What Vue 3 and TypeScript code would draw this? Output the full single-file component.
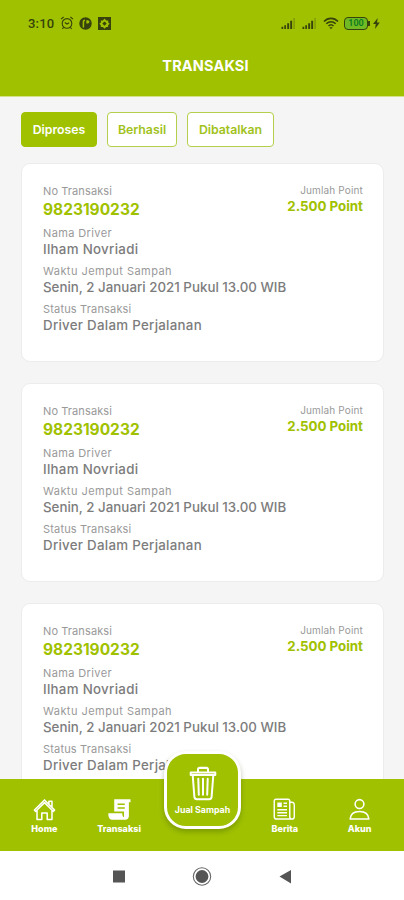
<script setup lang="ts">
interface Transaction {
  id: number
  number: string
  points: string
  driver: string
  pickup: string
  status: string
}

const filters: { label: string; key: string; active: boolean }[] = [
  { label: 'Diproses', key: 'process', active: true },
  { label: 'Berhasil', key: 'success', active: false },
  { label: 'Dibatalkan', key: 'cancelled', active: false },
]

const transactions: Transaction[] = [1, 2, 3].map((id) => ({
  id,
  number: '9823190232',
  points: '2.500 Point',
  driver: 'Ilham Novriadi',
  pickup: 'Senin, 2 Januari 2021 Pukul 13.00 WIB',
  status: 'Driver Dalam Perjalanan',
}))
</script>

<template>
  <div class="screen">
    <header class="header">
      <div class="status">
        <div class="status-left">
          <span class="clock">3:10</span>
          <svg class="alarm" width="14" height="14" viewBox="0 0 14 14" fill="none" stroke="currentColor" stroke-width="1.1">
            <circle cx="7" cy="7.4" r="4.8" />
            <path d="M1 3.2 3.6 1M13 3.2 10.4 1M3.6 11.2 2.4 13M10.4 11.2l1.2 1.8M4.8 6.5 7 8l2.2-1.2" />
          </svg>
          <svg class="pie" width="13" height="13" viewBox="0 0 13 13">
            <circle cx="6.5" cy="6.5" r="6.2" fill="currentColor" />
            <path d="M4.4 10.600V5.200c0-1.200.6-1.900 1.600-1.900" fill="none" stroke="#9fc100" stroke-width="1.500" />
            <path d="M7.300 3.200h1.500a1.600 1.600 0 0 1 0 3.200H7.300z" fill="#9fc100" />
          </svg>
          <svg class="puzzle" width="13" height="13" viewBox="0 0 13 13">
            <rect width="13" height="13" fill="currentColor" />
            <path d="m6.5 1.6 1.7 2h2v2l1.5 1.2-1.6 1.4v1.9H8.2l-1.7 1.7-1.6-1.7H2.8V8.2L1.3 6.8l1.6-1.3V3.6h2z" fill="#9fc100" />
            <path d="m6.5 4.4 2.2 2.2-2.2 2.2-2.2-2.2z" fill="currentColor" />
          </svg>
        </div>
        <div class="status-right">
          <svg v-for="n in 2" :key="n" class="signal" width="15" height="11" viewBox="0 0 15 11" fill="currentColor">
            <path d="M.5 8.7h1.7V11H.5zM3.3 7.2H5V11H3.3zM6.2 5.2h1.9V11H6.2zM9.2 2.7h1.9V11H9.2z" />
            <path d="M12.2 0H14v11h-1.8z" opacity=".25" />
          </svg>
          <svg class="wifi" width="16" height="13" viewBox="0 0 16 13" fill="none" stroke="currentColor" stroke-width="1.6">
            <path d="M1 4.5c4-4.2 10-4.2 14 0M3.3 6.8c2.8-2.8 6.6-2.8 9.4 0M5.5 9c1.5-1.500 3.500-1.500 5 0" />
            <path d="m6.3 10.2 1.7 2 1.7-2z" fill="currentColor" stroke="none" />
          </svg>
          <span class="battery">100</span>
          <svg class="bolt" width="7" height="11" viewBox="0 0 7 11"><path d="M4.7 0 0 6h2.8L2 11l4.8-6.4H4z" fill="currentColor" /></svg>
        </div>
      </div>
      <h1 class="title"><span>TRANSAKSI</span></h1>
    </header>

    <main class="content">
      <div class="filters">
        <button v-for="f in filters" :key="f.key" class="chip" :class="[f.key, { active: f.active }]">{{ f.label }}</button>
      </div>
      <article v-for="t in transactions" :key="t.id" class="card">
        <div class="details">
          <div class="field">
            <span class="label l-no">No Transaksi</span>
            <strong class="number">{{ t.number }}</strong>
          </div>
          <div class="field">
            <span class="label l-driver">Nama Driver</span>
            <span class="value v-driver">{{ t.driver }}</span>
          </div>
          <div class="field">
            <span class="label l-time">Waktu Jemput Sampah</span>
            <span class="value v-time">{{ t.pickup }}</span>
          </div>
          <div class="field">
            <span class="label l-status">Status Transaksi</span>
            <span class="value v-status">{{ t.status }}</span>
          </div>
        </div>
        <div class="points">
          <span class="points-label">Jumlah Point</span>
          <strong class="points-value">{{ t.points }}</strong>
        </div>
      </article>
    </main>

    <nav class="tabs">
      <a class="tab home">
        <svg width="23" height="23" viewBox="0 0 24 24" fill="none" stroke="currentColor" stroke-width="1.6" stroke-linejoin="round" stroke-linecap="round">
          <path d="M1.500 12.600 12 2l10.500 10.600-1.400 1.300L12 4.800l-9.100 9.100zM4.200 13v9.500h5v-6.800h5.600v6.800h5V13M16.600 6V3.400h3.200v6" />
        </svg>
        <span>Home</span>
      </a>
      <a class="tab trans">
        <svg width="23" height="23" viewBox="0 0 24 24">
          <path d="M6.500 1.300h17v3.200h-1.700v14c0 3-1.500 4.200-3.800 4.200H4C1.700 22.700.3 20.300.3 16h14.600c0 2.500.6 4 1.800 4V14H6.500z" fill="#fff" />
          <path d="M10 6.600h7.500M10 10.500h7.500" stroke="#9fc100" stroke-width="1.500" />
        </svg>
        <span>Transaksi</span>
      </a>
      <a class="tab news">
        <svg width="23" height="23" viewBox="0 0 24 24" fill="none" stroke="currentColor" stroke-width="1.5" stroke-linejoin="round">
          <path d="M17.500 4.200V3c0-1-.7-1.700-1.700-1.700H3C2 1.300 1.300 2 1.300 3v16.500c0 1.500 1 2.500 2.500 2.500h15.900c1.500 0 2.500-1 2.500-2.500V7c0-1.500-1.500-2.800-4.700-2.800v15c0 1.800.8 2.800 2.200 2.800" />
          <path d="M4.500 4.700h4.700v4.700H4.500z" fill="currentColor" stroke="none" />
          <path d="M11 5.500h3.600M11 8.700h3.600M4.500 12.300h10.100M4.500 15.300h10.100M4.500 18.400h10.100" />
        </svg>
        <span>Berita</span>
      </a>
      <a class="tab account">
        <svg width="23" height="23" viewBox="0 0 24 24" fill="none" stroke="currentColor" stroke-width="1.600" stroke-linejoin="round">
          <circle cx="12" cy="6.300" r="4.600" />
          <path d="M2.200 22c.4-5.400 4.300-8 9.800-8s9.400 2.600 9.800 8z" />
        </svg>
        <span>Akun</span>
      </a>
      <a class="sell">
        <svg width="28" height="35" viewBox="0 0 28 34" preserveAspectRatio="none" fill="none" stroke="#fff" stroke-width="2" stroke-linejoin="round" stroke-linecap="round">
          <path d="M1.700 6.300h24.600v2.500H1.700zM9 6V3.400c0-1 .6-1.600 1.600-1.600h6.800c1 0 1.600.6 1.600 1.600V6M3.700 9l1.700 21c.2 1.500 1 2.300 2.400 2.300h12.400c1.400 0 2.200-.8 2.400-2.300L24.300 9M9.300 12.500l.5 15.500M14 12.500V28M18.700 12.500 18.200 28" />
        </svg>
        <span>Jual Sampah</span>
      </a>
    </nav>

    <footer class="system">
      <svg width="404" height="49" viewBox="0 0 404 49">
        <rect x="113" y="19.500" width="12" height="12" fill="#555" />
        <circle cx="202" cy="25.500" r="8.700" fill="none" stroke="#666" stroke-width="1.100" />
        <circle cx="202" cy="25.500" r="6.400" fill="#555" />
        <path d="M279.500 25.500 291 19v13.500z" fill="#555" />
      </svg>
    </footer>
  </div>
</template>

<style>
body {
  margin: 0;
}
</style>

<style scoped>
.screen {
  width: 404px;
  height: 900px;
  display: flex;
  flex-direction: column;
  overflow: hidden;
  background: #f5f5f5;
  font-family: Inter, 'Noto Sans', sans-serif;
  white-space: nowrap;
}
.header {
  height: 97px;
  flex: none;
  background: #9fc100;
  border-bottom: 1px solid #d3e18a;
  box-sizing: border-box;
}
.status {
  height: 46px;
  display: flex;
  justify-content: space-between;
  align-items: center;
  padding: 0 24px 0 28px;
  box-sizing: border-box;
  color: #36430c;
}
.status-left,
.status-right {
  display: flex;
  align-items: center;
}
.clock {
  width: 32px;
  font: 500 13px Roboto, sans-serif;
  letter-spacing: 0.2px;
}
.pie {
  margin: 0 6px 0 5px;
}
.signal {
  margin-right: 6px;
}
.wifi {
  margin-right: 5px;
}
.battery {
  position: relative;
  width: 24px;
  height: 13px;
  box-sizing: border-box;
  border: 1.500px solid #36430c;
  border-radius: 4px;
  background: #72ba24;
  color: #087b20;
  font: 600 9px/11px Roboto, sans-serif;
  text-align: center;
  margin-right: 5px;
}
.battery::after {
  content: '';
  position: absolute;
  right: -3px;
  top: 3px;
  width: 2px;
  height: 5px;
  background: #36430c;
}
.title {
  margin: 0;
  height: 38px;
  display: flex;
  align-items: center;
  justify-content: center;
  padding-left: 7px;
  color: #fff;
  font-size: 14.500px;
  font-weight: 700;
  letter-spacing: 0.15px;
}
.content {
  flex: 1;
  min-height: 0;
  overflow: hidden;
  padding: 15px 20px 0 21px;
}
.filters {
  display: flex;
  gap: 10px;
  margin-bottom: 16px;
}
.chip {
  height: 35px;
  box-sizing: border-box;
  padding: 0;
  border: 1px solid #b3cf4b;
  border-radius: 4px;
  background: #fff;
  color: #a1c21b;
  font: 600 12.300px Inter, sans-serif;
}
.chip.active {
  background: #9fc100;
  border-color: #9fc100;
  color: #fff;
}
.process {
  width: 76px;
}
.success {
  width: 70px;
}
.cancelled {
  width: 87px;
}
.card {
  height: 199px;
  box-sizing: border-box;
  margin-bottom: 21px;
  padding: 19px 20px 19px 21px;
  display: flex;
  justify-content: space-between;
  border: 1px solid #ececec;
  border-radius: 9px;
  background: #fff;
}
.field {
  display: flex;
  flex-direction: column;
  align-items: flex-start;
  margin-bottom: 5px;
}
.label {
  font-size: 11px;
  line-height: 16px;
  color: #999;
}
.value {
  font-size: 13.300px;
  line-height: 17px;
  font-weight: 500;
  color: #7c7c7c;
}
.l-no {
  letter-spacing: 0.1px;
}
.l-driver {
  letter-spacing: 0.38px;
}
.l-time {
  letter-spacing: 0.46px;
}
.l-status {
  letter-spacing: 0.17px;
}
.v-driver {
  letter-spacing: 0.3px;
}
.v-time {
  letter-spacing: 0.02px;
}
.v-status {
  letter-spacing: 0.28px;
}
.number {
  font-size: 15.500px;
  line-height: 21px;
  font-weight: 700;
  color: #9fc100;
}
.points {
  display: flex;
  flex-direction: column;
  align-items: flex-end;
}
.points-label {
  font-size: 10px;
  line-height: 15px;
  letter-spacing: 0.15px;
  color: #999;
}
.points-value {
  font-size: 13.300px;
  line-height: 17px;
  font-weight: 700;
  color: #9fc100;
}
.tabs {
  position: relative;
  flex: none;
  height: 72px;
  display: flex;
  padding: 19px 14px 0;
  box-sizing: border-box;
  background: #9fc100;
  color: #fff;
}
.tab {
  width: 61px;
  display: flex;
  flex-direction: column;
  align-items: center;
  font-size: 9px;
  font-weight: 800;
  line-height: 16px;
}
.trans {
  margin-left: 14px;
  margin-right: 105px;
}
.news {
  margin-right: 14px;
}
.sell {
  position: absolute;
  left: 164px;
  top: -28px;
  width: 77px;
  height: 78px;
  box-sizing: border-box;
  border: 3px solid #fff;
  border-radius: 22px;
  background: #9fc100;
  box-shadow: 0 3px 5px rgba(50, 70, 0, 0.3);
  display: flex;
  flex-direction: column;
  align-items: center;
  padding-top: 12px;
  font-size: 8.800px;
  font-weight: 700;
  line-height: 17px;
}
.system {
  flex: none;
  height: 49px;
  background: #fff;
}
</style>
